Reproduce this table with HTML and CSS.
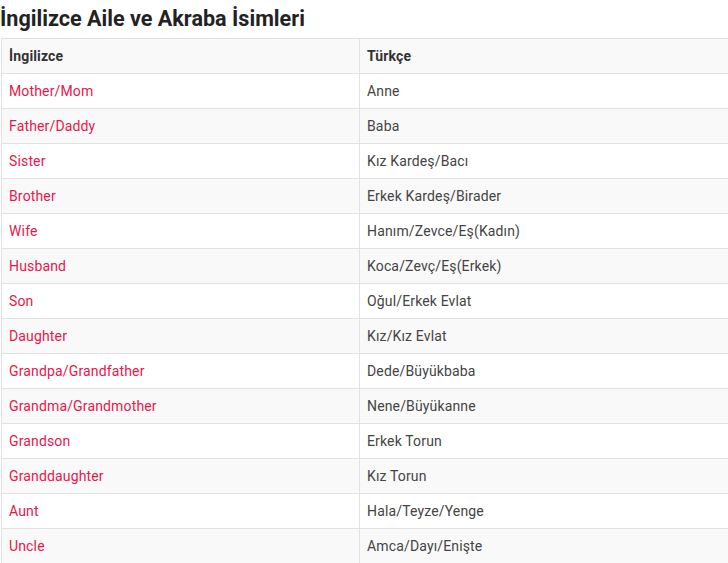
FILE: index.html
```html
<!DOCTYPE html>
<html lang="tr">
<head>
<meta charset="utf-8">
<link rel="stylesheet" href="styles.css">
</head>
<body>
<h2 class="title">İngilizce Aile ve Akraba İsimleri</h2>
<table class="words">
<thead>
<tr><th class="col-en">İngilizce</th><th>Türkçe</th></tr>
</thead>
<tbody>
<tr><td class="en">Mother/Mom</td><td>Anne</td></tr>
<tr><td class="en">Father/Daddy</td><td>Baba</td></tr>
<tr><td class="en">Sister</td><td>Kız Kardeş/Bacı</td></tr>
<tr><td class="en">Brother</td><td>Erkek Kardeş/Birader</td></tr>
<tr><td class="en">Wife</td><td>Hanım/Zevce/Eş(Kadın)</td></tr>
<tr><td class="en">Husband</td><td>Koca/Zevç/Eş(Erkek)</td></tr>
<tr><td class="en">Son</td><td>Oğul/Erkek Evlat</td></tr>
<tr><td class="en">Daughter</td><td>Kız/Kız Evlat</td></tr>
<tr><td class="en">Grandpa/Grandfather</td><td>Dede/Büyükbaba</td></tr>
<tr><td class="en">Grandma/Grandmother</td><td>Nene/Büyükanne</td></tr>
<tr><td class="en">Grandson</td><td>Erkek Torun</td></tr>
<tr><td class="en">Granddaughter</td><td>Kız Torun</td></tr>
<tr><td class="en">Aunt</td><td>Hala/Teyze/Yenge</td></tr>
<tr><td class="en">Uncle</td><td>Amca/Dayı/Enişte</td></tr>
</tbody>
</table>
</body>
</html>
```
FILE: styles.css
```css
html, body {
  margin: 0;
  padding: 0;
  background: #fff;
  overflow: hidden;
}
body {
  font-family: Roboto, "Liberation Sans", sans-serif;
  color: #333;
  width: 728px;
}
.title {
  margin: 0;
  padding-top: 6px;
  font-size: 21.6px;
  line-height: 26px;
  font-weight: 700;
  color: #222;
}
.words {
  margin: 6px 0 0 1px;
  border-collapse: collapse;
  width: 760px;
  table-layout: fixed;
  font-size: 14px;
  line-height: 20px;
  letter-spacing: 0.15px;
}
.words th, .words td {
  border: 1px solid #e2e2e2;
  padding: 7px 7px;
  text-align: left;
}
.words th {
  font-weight: 700;
  background: #f9f9f9;
  color: #333;
}
.col-en {
  width: 343px;
}
.words tbody tr:nth-child(even) td {
  background: #f9f9f9;
}
.words td {
  color: #444;
}
.words td.en {
  color: #e8164c;
}
```
